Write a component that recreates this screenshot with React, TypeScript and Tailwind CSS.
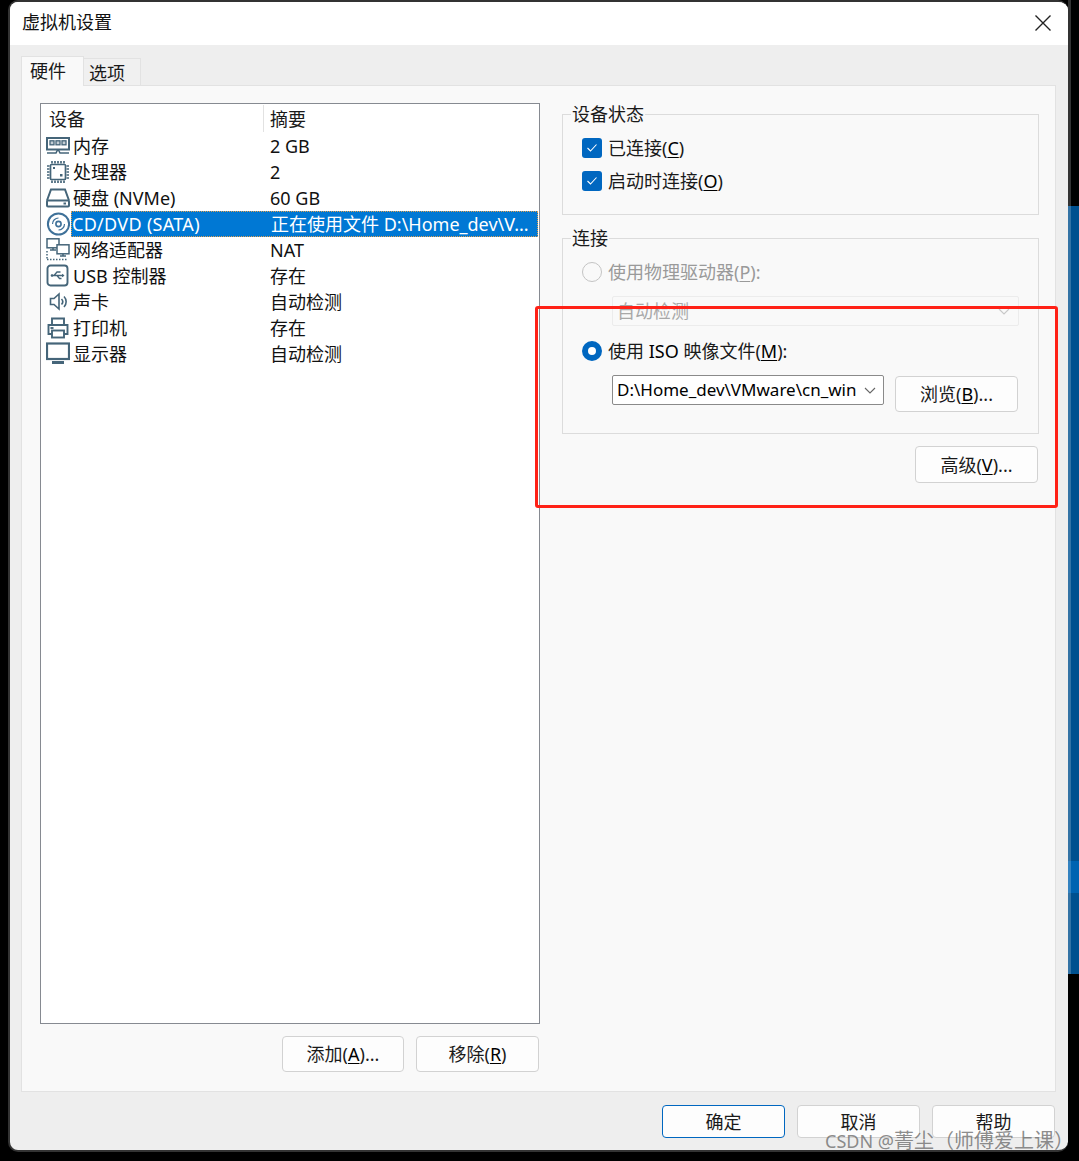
import React from 'react';

const FONT = '"Noto Sans", "Noto Sans CJK SC", sans-serif';

const Mn = ({ children }: { children: string }) => <span className="text-black underline underline-offset-2">{children}</span>;

const SLATE = '#456579';

const MemoryIcon = () => (
  <svg width="24" height="24" viewBox="0 0 24 24" fill="none" stroke={SLATE} strokeWidth="2">
    <rect x="1" y="4" width="22" height="11.5" />
    <rect x="4" y="6.8" width="4" height="4" strokeWidth="1.3" fill="#c4ced5" />
    <rect x="10" y="6.8" width="4" height="4" strokeWidth="1.3" fill="#c4ced5" />
    <rect x="16" y="6.8" width="4" height="4" strokeWidth="1.3" fill="#c4ced5" />
    <path d="M1 19h9l1.5-3h1l1.5 3h9" strokeWidth="1.6" />
  </svg>
);

const CpuIcon = () => (
  <svg width="24" height="24" viewBox="0 0 24 24" fill="none" stroke={SLATE} strokeWidth="1.7">
    <rect x="4.5" y="4.5" width="15" height="15" rx="1" />
    <path d="M6 1v2.5M9 1v2.5M12 1v2.5M15 1v2.5M18 1v2.5M6 20.5V23M9 20.5V23M12 20.5V23M15 20.5V23M18 20.5V23M1 6h2.5M1 9h2.5M1 12h2.5M1 15h2.5M1 18h2.5M20.5 6H23M20.5 9H23M20.5 12H23M20.5 15H23M20.5 18H23" />
    <rect x="7" y="7" width="2" height="2" fill={SLATE} stroke="none" />
    <rect x="14" y="14" width="2.5" height="2.5" fill={SLATE} stroke="none" />
  </svg>
);

const DiskIcon = () => (
  <svg width="24" height="24" viewBox="0 0 24 24" fill="none" stroke={SLATE} strokeWidth="2">
    <path d="M1 14.5 5 3.5h14l4 11" />
    <rect x="1" y="14.5" width="22" height="6" rx="1" />
    <rect x="17.5" y="16.5" width="2.5" height="2" fill={SLATE} stroke="none" />
  </svg>
);

const CdIcon = () => (
  <svg width="24" height="24" viewBox="0 0 24 24" fill="none" stroke="#3f7199" strokeWidth="1.6">
    <circle cx="12.5" cy="12" r="10.6" strokeWidth="2" />
    <circle cx="12.5" cy="12" r="2.6" />
    <path d="M12.5 6a6 6 0 0 0-6 6M12.5 18a6 6 0 0 0 6-6" strokeWidth="1.2" />
  </svg>
);

const NetworkIcon = () => (
  <svg width="24" height="24" viewBox="0 0 24 24" fill="none" stroke={SLATE} strokeWidth="1.5">
    <rect x="1" y="0.8" width="12" height="9" />
    <path d="M4 12h6M7 10v2" />
    <rect x="11" y="6.8" width="12" height="9" fill="#fff" />
    <path d="M14 18h6M17 16v2" />
    <path d="M1 21.5h20M1 13v8" strokeDasharray="1.5 1.5" />
  </svg>
);

const UsbIcon = () => (
  <svg width="24" height="24" viewBox="0 0 24 24" fill="none" stroke={SLATE} strokeWidth="1.9">
    <rect x="1.5" y="1.5" width="20" height="20" rx="3" />
    <path d="M5.5 11.5h12M8 11.5l3-3.5h3.5M11 11.5l2.5 3h2" strokeWidth="1.3" />
    <circle cx="6" cy="11.5" r="1.3" fill={SLATE} stroke="none" />
    <path d="m16 9.8 2.5 1.7-2.5 1.7z" fill={SLATE} stroke="none" />
  </svg>
);

const SoundIcon = () => (
  <svg width="24" height="24" viewBox="0 0 24 24" fill="none" stroke={SLATE} strokeWidth="1.6">
    <path d="M4.5 8.5h3.5l5-4.5v15l-5-4.5H4.5z" />
    <path d="M15.5 9a4 4 0 0 1 0 5.5M18 6.5a7.5 7.5 0 0 1 0 10.5" />
  </svg>
);

const PrinterIcon = () => (
  <svg width="24" height="24" viewBox="0 0 24 24" fill="none" stroke={SLATE} strokeWidth="1.9">
    <path d="M6 9V2.5h12V9" />
    <path d="M6 18H2.5V9h19v9H18" />
    <rect x="6" y="14.5" width="12" height="7" />
    <path d="M4.5 12h3" />
  </svg>
);

const MonitorIcon = () => (
  <svg width="24" height="24" viewBox="0 0 24 24" fill="none" stroke={SLATE} strokeWidth="2.2">
    <rect x="1" y="1.5" width="22" height="15.5" />
    <path d="M6 20.5h12" strokeWidth="3" />
  </svg>
);

const devices = [
  { icon: <MemoryIcon />, name: '内存', summary: '2 GB' },
  { icon: <CpuIcon />, name: '处理器', summary: '2' },
  { icon: <DiskIcon />, name: '硬盘 (NVMe)', summary: '60 GB' },
  { icon: <CdIcon />, name: 'CD/DVD (SATA)', summary: '正在使用文件 D:\\Home_dev\\V...', selected: true },
  { icon: <NetworkIcon />, name: '网络适配器', summary: 'NAT' },
  { icon: <UsbIcon />, name: 'USB 控制器', summary: '存在' },
  { icon: <SoundIcon />, name: '声卡', summary: '自动检测' },
  { icon: <PrinterIcon />, name: '打印机', summary: '存在' },
  { icon: <MonitorIcon />, name: '显示器', summary: '自动检测' },
];

const Btn = ({ className = '', primary = false, children }: { className?: string; primary?: boolean; children: React.ReactNode }) => (
  <div className={`flex items-center justify-center rounded-[4px] border bg-[#fdfdfd] text-[18px] leading-none text-[#1a1a1a] ${primary ? 'border-[#0067c0]' : 'border-[#d2d2d2]'} ${className}`}>
    {children}
  </div>
);

const Chevron = ({ color }: { color: string }) => (
  <svg width="12" height="7" viewBox="0 0 12 7" fill="none" stroke={color} strokeWidth="1.1">
    <path d="m1 1 5 5 5-5" />
  </svg>
);

const Check = () => (
  <div className="flex h-[20px] w-[20px] items-center justify-center rounded-[3px] bg-[#0067c0]">
    <svg width="12" height="10" viewBox="0 0 12 10" fill="none" stroke="#fff" strokeWidth="1.1">
      <path d="m1.5 5 3 3 6-6.5" />
    </svg>
  </div>
);

const Group = ({ title, className, children }: { title: string; className: string; children: React.ReactNode }) => (
  <div className={`relative border border-[#dcdcdc] ${className}`}>
    <div className="absolute left-[8px] top-[-13px] bg-[#f9f9f9] px-[1px] text-[18px] leading-[24px] text-[#1a1a1a]">{title}</div>
    {children}
  </div>
);

const App = () => {
  return (
    <div className="relative flex h-[1161px] w-[1079px] overflow-hidden bg-black" style={{ fontFamily: FONT }}>
      <div className="ml-[8px] flex h-[1152px] w-[1060px] flex-col overflow-hidden rounded-t-[10px] rounded-b-[10px] border-2 border-r-0 border-[#333333] bg-[#eeeeee]">
        {/* title bar */}
        <div className="flex h-[43px] shrink-0 items-center justify-between bg-white pb-[2px] pl-[12px] pr-[16px]">
          <span className="text-[18px] text-[#111]">虚拟机设置</span>
          <svg width="18" height="18" viewBox="0 0 18 18" fill="none" stroke="#222" strokeWidth="1.4">
            <path d="m1.5 1.5 15 15M16.5 1.5l-15 15" />
          </svg>
        </div>

        <div className="flex-1 px-[11px] pt-[11px]">
          {/* tabs */}
          <div className="flex h-[29px] items-end text-[18px] leading-none text-[#1a1a1a]">
            <div className="relative z-10 mb-[-1px] flex h-[30px] w-[63px] items-center border border-b-0 border-[#e2e2e2] bg-[#f9f9f9] pb-[2px] pl-[8px]">硬件</div>
            <div className="flex h-[27px] w-[57px] items-center border border-b-0 border-l-0 border-[#e2e2e2] bg-[#f0f0f0] pl-[5px] pt-[2px]">选项</div>
          </div>

          {/* tab page */}
          <div className="flex h-[1007px] w-[1035px] border border-[#e2e2e2] bg-[#f9f9f9] pl-[18px] pt-[17px]">
            <div className="flex w-[500px] flex-col">
              <div className="h-[921px] border border-[#868a91] bg-white text-[18px] leading-none">
                <div className="flex h-[29px] items-center text-[#1a1a1a]">
                  <div className="w-[222px] pl-[8px]">设备</div>
                  <div className="flex h-[27px] items-center border-l border-[#e2e2e2] pl-[6px]">摘要</div>
                </div>
                {devices.map((d) => (
                  <div key={d.name} className="flex h-[26px] items-center">
                    <div className="flex w-[30px] shrink-0 pl-[5px]">{d.icon}</div>
                    {d.selected ? (
                      <div className="flex h-[26px] w-[467px] items-center border border-dotted border-[#e0a050] bg-[#0078d4] text-white">
                        <div className="w-[199px] shrink-0 tracking-[0.3px]">{d.name}</div>
                        <div className="whitespace-nowrap">{d.summary}</div>
                      </div>
                    ) : (
                      <>
                        <div className="w-[199px] shrink-0 pl-[2px] text-[#111]">{d.name}</div>
                        <div className="whitespace-nowrap text-[#111]">{d.summary}</div>
                      </>
                    )}
                  </div>
                ))}
              </div>
              <div className="mt-[12px] flex justify-end gap-[12px] pr-[1px]">
                <Btn className="h-[36px] w-[122px]">添加(<Mn>A</Mn>)...</Btn>
                <Btn className="h-[36px] w-[123px]">移除(<Mn>R</Mn>)</Btn>
              </div>
            </div>

            <div className="ml-[22px] flex w-[477px] flex-col pt-[11px] text-[18px] leading-none text-[#1a1a1a]">
              <Group title="设备状态" className="h-[101px]">
                <div className="flex flex-col gap-[13px] pl-[19px] pt-[23px]">
                  <div className="flex items-center gap-[6px]">
                    <Check />
                    <span>已连接(<Mn>C</Mn>)</span>
                  </div>
                  <div className="flex items-center gap-[6px]">
                    <Check />
                    <span>启动时连接(<Mn>O</Mn>)</span>
                  </div>
                </div>
              </Group>

              <Group title="连接" className="mt-[23px] h-[196px]">
                <div className="pl-[19px] pt-[22px]">
                  <div className="flex h-[22px] items-center gap-[6px] text-[#9a9a9a]">
                    <div className="h-[20px] w-[20px] rounded-full border border-[#c4c4c4]" />
                    <span>使用物理驱动器(<span className="underline underline-offset-2">P</span>):</span>
                  </div>
                  <div className="ml-[30px] mt-[13px] flex h-[30px] w-[407px] items-center justify-between rounded-[2px] border border-[#ececec] pl-[4px] pr-[8px] text-[#a8a8a8]">
                    <span>自动检测</span>
                    <Chevron color="#c8c8c8" />
                  </div>
                  <div className="mt-[14px] flex h-[22px] items-center gap-[6px]">
                    <div className="h-[20px] w-[20px] rounded-full border-[6px] border-[#0067c0] bg-white" />
                    <span className="whitespace-pre">使用 <span className="text-black">ISO</span> 映像文件(<Mn>M</Mn>):</span>
                  </div>
                  <div className="ml-[30px] mt-[13px] flex items-start">
                    <div className="flex h-[30px] w-[272px] items-center rounded-[2px] border border-[#8a8a8a] bg-white pl-[4px] pr-[7px]">
                      <span className="mb-[1px] w-[239px] overflow-hidden whitespace-nowrap text-[17px] leading-[24px] text-black">D:\Home_dev\VMware\cn_windows</span>
                      <div className="ml-auto"><Chevron color="#666" /></div>
                    </div>
                    <Btn className="ml-[11px] mt-[1px] h-[36px] w-[123px]">浏览(<Mn>B</Mn>)...</Btn>
                  </div>
                </div>
              </Group>

              <div className="mt-[12px] flex justify-end pr-[1px]">
                <Btn className="h-[37px] w-[123px]">高级(<Mn>V</Mn>)...</Btn>
              </div>
            </div>
          </div>

          {/* dialog buttons */}
          <div className="mt-[13px] flex justify-end gap-[12px] pr-[2px]">
            <Btn primary className="h-[33px] w-[123px]">确定</Btn>
            <Btn className="h-[33px] w-[123px]">取消</Btn>
            <Btn className="h-[33px] w-[123px]">帮助</Btn>
          </div>
        </div>
      </div>

      {/* edge of the window behind */}
      <div className="flex h-[974px] w-[11px] flex-col">
        <div className="h-[206px] border-l-[3px] border-white/20 bg-black" />
        <div className="h-[655px] border-l-[3px] border-white/20 bg-[#00508f]" />
        <div className="h-[32px] border-l-[3px] border-white/20 bg-[#0063b1]" />
        <div className="h-[81px] border-l-[3px] border-white/20 bg-[#00508f]" />
      </div>

      {/* annotation and watermark on the screenshot */}
      <div className="absolute left-[535px] top-[306px] h-[202px] w-[523px] rounded-[3px] border-[3px] border-[#ff2116]" />
      <div className="absolute left-[825px] top-[1128px] whitespace-nowrap text-[18px] leading-[26px] text-[#6e6e6e]/80">CSDN @<span className="text-[20px]">菁尘（师傅爱上课）</span></div>
    </div>
  );
};

export default App;
